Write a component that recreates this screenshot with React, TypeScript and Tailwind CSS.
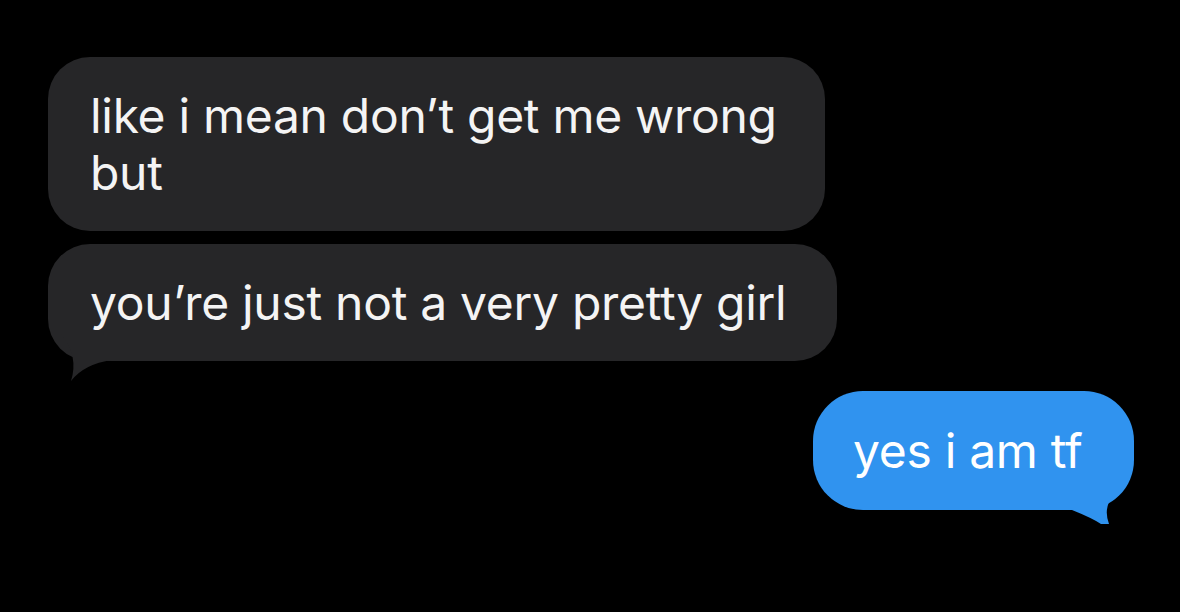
import React from 'react';

const font = { fontFamily: 'Inter, "Noto Sans", sans-serif' };

function GrayTail() {
  return (
    <svg className="absolute left-0 bottom-[-21px] w-[70px] h-[56px]" viewBox="0 0 70 56">
      <path d="M13 8 Q31 30 23 55 Q36 38 64 34 L64 8 Z" fill="#262628" />
    </svg>
  );
}

function BlueTail() {
  return (
    <svg className="absolute right-0 bottom-[-14px] w-[64px] h-[46px]" viewBox="0 0 64 46">
      <path d="M20 18 L43 18 Q33 30 39 46 L31 46 Q22 40 2 32 L2 18 Z" fill="#3093ef" />
    </svg>
  );
}

export default function App() {
  return (
    <div className="w-[1180px] h-[612px] bg-black text-[#f4f4f4] overflow-hidden" style={font}>
      <div className="flex flex-col pt-[57px] pl-[48px] pr-[46px]">
        <div className="w-[777px] rounded-[42px] bg-[#262628] pl-[42px] pr-[30px] py-[30px] text-[48px] leading-[57px] tracking-[-0.3px]">
          like i mean don’t get me wrong
          <br />
          but
        </div>

        <div className="relative mt-[13px] w-[789px] rounded-[42px] bg-[#262628] pl-[42px] py-[30px] text-[48px] leading-[57px] tracking-[-0.3px]">
          <GrayTail />
          <span className="relative">you’re just not a very pretty girl</span>
        </div>

        <div className="relative self-end mt-[30px] w-[321px] rounded-[50px] bg-[#3093ef] pl-[40px] py-[31px] text-[48px] leading-[57px] tracking-[-0.3px] text-white">
          <BlueTail />
          <span className="relative">yes i am tf</span>
        </div>
      </div>
    </div>
  );
}
